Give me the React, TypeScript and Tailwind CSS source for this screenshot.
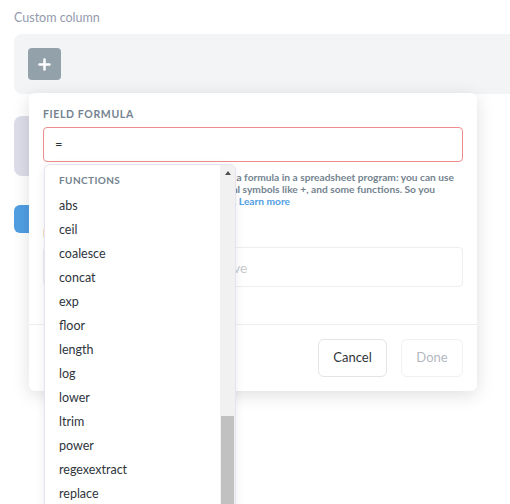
import { Plus } from "lucide-react"

const functions = [
    "abs",
    "ceil",
    "coalesce",
    "concat",
    "exp",
    "floor",
    "length",
    "log",
    "lower",
    "ltrim",
    "power",
    "regexextract",
    "replace",
    "round",
    "rtrim",
]

const FunctionsDropdown = () => {
    return (
        <div className="absolute left-[15px] top-[71px] w-[192px] h-[360px] flex bg-white border border-[#e6e3ee] rounded-t-md shadow-[0_2px_10px_rgba(0,0,0,0.08)] overflow-hidden">
            <div className="flex-1 flex flex-col">
                <div className="pl-[14px] pt-[8px] mb-[7px] text-[10px] leading-[14px] font-bold tracking-[0.04em] text-[#74838f]">
                    FUNCTIONS
                </div>
                {functions.map((fn) => (
                    <div key={fn} className="pl-[14px] h-[24px] leading-[24px] text-[12.5px] text-[#2e353b]">
                        {fn}
                    </div>
                ))}
            </div>
            <div className="w-[15px] flex flex-col bg-[#f1f1f1]">
                <div className="h-[15px] flex items-center justify-center">
                    <div className="w-0 h-0 border-l-[3.5px] border-r-[3.5px] border-b-[4px] border-l-transparent border-r-transparent border-b-[#505050]"></div>
                </div>
                <div className="h-[236px]"></div>
                <div className="mx-px flex-1 bg-[#c1c1c1]"></div>
            </div>
        </div>
    )
}

export default function App() {
    return (
        <div className="relative w-[510px] h-[504px] overflow-hidden bg-white font-['Lato',sans-serif]">
            <div className="pl-[14px] pt-[9px]">
                <div className="text-[12.5px] leading-[18px] text-[#949aab]">Custom column</div>
                <div className="mt-[7px] h-[60px] flex items-center pl-[14px] bg-[#f3f4f6] rounded-l-lg">
                    <button type="button" className="w-[33px] h-[32px] flex items-center justify-center bg-[#93a1ab] rounded text-white">
                        <Plus size={17} strokeWidth={3.5} />
                    </button>
                </div>
                <div className="mt-[22px] w-[160px] h-[60px] rounded-lg bg-[#dcdde8]"></div>
                <div className="mt-[29px] w-[110px] h-[28px] rounded-md bg-[#509ee3]"></div>
            </div>

            <div className="absolute left-[29px] top-[93px] w-[448px] h-[298px] bg-white rounded-md shadow-[0_4px_18px_rgba(0,0,0,0.13)] flex flex-col">
                <div className="px-[14px] pt-[14px]">
                    <div className="text-[10.5px] leading-[14px] font-bold tracking-[0.06em] text-[#74838f]">FIELD FORMULA</div>
                    <div className="mt-[6px] h-[35px] flex items-center px-[11px] border border-[#ef8c8c] rounded text-[13px] text-[#2e353b]">
                        =
                    </div>
                    <div className="mt-[9px] flex flex-col items-end pr-[9px] text-[10.2px] leading-[12px] font-bold text-[#74838f] whitespace-nowrap">
                        <span>Think of this as being kind of like writing a formula in a spreadsheet program: you can use</span>
                        <span className="self-stretch">
                            <span className="inline-block w-full text-right pr-[19px]">numbers, fields in this table, mathematical symbols like +, and some functions. So you</span>
                        </span>
                        <span className="self-stretch">
                            <span className="inline-block w-full text-right pr-[164px]">could type something like Subtotal - Cost. <span className="text-[#509ee3]">Learn more</span></span>
                        </span>
                    </div>
                    <div className="mt-[19px] text-[10.5px] leading-[14px] font-bold tracking-[0.06em] text-[#74838f]">NAME</div>
                    <div className="mt-[7px] h-[40px] flex items-center px-[12px] border border-[#eceef0] rounded text-[14px] text-[#c5cad0]">
                        Something nice and descriptive
                    </div>
                </div>
                <div className="mt-auto border-t border-[#eceef0] h-[67px] flex items-center justify-end gap-[14px] px-[14px]">
                    <button type="button" className="h-[38px] w-[69px] border border-[#e2e4e8] rounded-md text-[13px] text-[#2e353b]">
                        Cancel
                    </button>
                    <button type="button" className="h-[38px] w-[62px] border border-[#eef0f2] rounded-md text-[13px] text-[#b4b8bf]">
                        Done
                    </button>
                </div>
                <FunctionsDropdown />
            </div>
        </div>
    )
}
